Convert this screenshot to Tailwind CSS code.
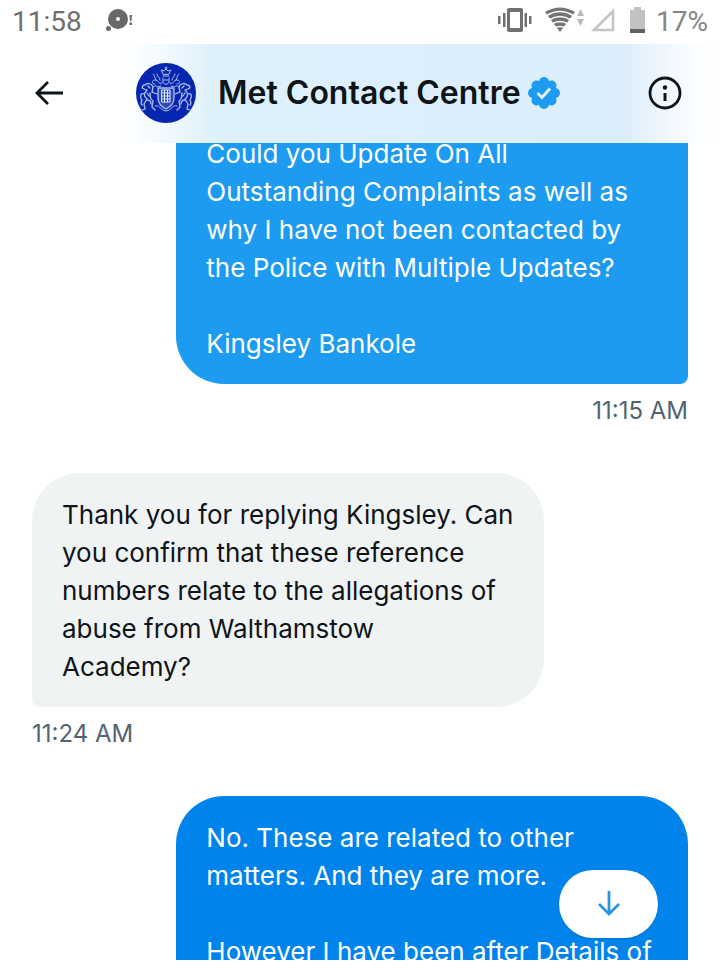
<!DOCTYPE html>
<html lang="en">
<head>
    <meta charset="UTF-8">
    <meta name="viewport" content="width=device-width, initial-scale=1.0">
    <title>Met Contact Centre</title>
    <script src="https://cdn.jsdelivr.net/npm/@tailwindcss/browser@4"></script>
</head>
<body class="bg-white text-[#0f1419] font-['Inter','Liberation_Sans',sans-serif] h-screen flex flex-col overflow-hidden">

<!-- Status bar -->
<div class="h-11 shrink-0 flex items-center justify-between px-3 text-[#707070] font-['Roboto',sans-serif] text-[28px] leading-8">
    <div class="flex items-center gap-6">
        <span>11:58</span>
        <svg class="w-7 h-6 mb-1" viewBox="0 0 28 24" fill="#686868">
            <path fill-rule="evenodd" d="M12 1a10 10 0 1 1 0 20a10 10 0 0 1 0-20zm0 8a2 2 0 1 0 0 4a2 2 0 0 0 0-4z"/>
            <circle cx="2.500" cy="20.500" r="2.500"/>
            <path d="M23.500 7h2.500l-.5 6h-1.500zM23.500 14.500h2.500v2.500h-2.500z"/>
        </svg>
    </div>
    <div class="flex items-center">
        <svg class="w-[150px] h-8 mr-2" viewBox="0 0 150 32">
            <g fill="#707070">
                <path fill-rule="evenodd" d="M11 2h12a2 2 0 0 1 2 2v20a2 2 0 0 1-2 2H11a2 2 0 0 1-2-2V4a2 2 0 0 1 2-2zm1 4v16h10V6z"/>
                <path d="M0 10h2.500v8H0zM5 7h2.500v14H5zM26.500 7H29v14h-2.500zM31 10h2.500v8H31z"/>
            </g>
            <path fill="#757575" d="M47 6Q62-3 77 6L62 26z"/>
            <path fill="none" stroke="#fff" stroke-width="1.500" d="M48 10q14-9 28 0M51 14q11-7 22 0M54 18q8-5 16 0M57 22q5-3 10 0"/>
            <path fill="#b8b8b8" d="M79 10l3.500-7 3.500 7zM79 13h7l-3.500 7z"/>
            <path fill="none" stroke="#c4c4c4" stroke-width="2.500" d="M96 24L115 5v19z"/>
            <path fill="#c2c2c2" d="M136 1h7v3h4v19h-15V4h4z"/>
            <path fill="#606060" d="M132 23h15v4h-15z"/>
        </svg>
        <span class="text-[#858585]">17%</span>
    </div>
</div>

<!-- Conversation header -->
<header class="relative z-10 shrink-0 h-[99px] flex items-center pl-8 pr-[37px] pb-0.5 bg-[linear-gradient(to_right,#fff_17%,#f2f9fe_23%,#def0fc_30%,#dceefc_87%,#f4faff_94%,#fff_99%)]">
    <button type="button" aria-label="Back" class="w-9 h-9">
        <svg class="w-9 h-9" viewBox="0 0 36 36" fill="none" stroke="#0f1419" stroke-width="2.800">
            <path d="M31 18H6M16 7L5 18l11 11"/>
        </svg>
    </button>
    <svg class="w-15 h-15 ml-17 shrink-0" viewBox="0 0 60 60" fill="none" stroke="#aebfeb" stroke-linecap="round">
        <circle cx="30" cy="30" r="30" fill="#0726b0" stroke="none"/>
        <!-- crown and helmet -->
        <path stroke-width="1" d="M27 11l-2-4 3 1 2-2 2 2 3-1-2 4zM27 13h6M30 4v2M29 5h2M27 15v4c1 3 5 3 6 0v-4M28 17h4"/>
        <!-- mantling -->
        <path stroke-width="1" d="M26 20c-4 2-4-4-7-3-4 0-3 5 0 4M34 20c4 2 4-4 7-3 4 0 3 5 0 4M25 23c-4 2-6-2-8 1M35 23c4 2 6-2 8 1M21 18c-3-2-1-5-4-7M39 18c3-2 1-5 4-7M24 17c0-3-3-3-3-6M36 17c0-3 3-3 3-6"/>
        <!-- shield -->
        <path stroke-width="1.300" fill="#2d4abb" d="M22 25h16v10c0 6-4 9-8 11-4-2-8-5-8-11z"/>
        <path stroke-width="1" stroke="#dbe4fa" d="M26 27h8v12h-8zM28.500 27v12M31.500 27v12M26 30h8M26 33h8M26 36h8"/>
        <!-- supporters -->
        <g stroke-width="1.300">
            <path d="M17 24c-1-3-5-5-8-2-3 0-4 3-1 4l3 1M17 24l-1 5 5 2M11 27c-3 3-4 6 0 9l-3 5 1 5-3 1M14 30c1 4-1 5 3 8l-1 6 3 3M11 37c3 0 4 2 4 4M8 31c-4-2-4 4-2 6-1 2-1 4 0 5M12 23l2 2M11 30l2 3"/>
            <path d="M43 24c1-3 5-5 8-2 3 0 4 3 1 4l-3 1M43 24l1 5-5 2M49 27c3 3 4 6 0 9l3 5-1 5 3 1M46 30c-1 4 1 5-3 8l1 6-3 3M49 37c-3 0-4 2-4 4M52 31c4-2 4 4 2 6 1 2 1 4 0 5M48 23l-2 2M49 30l-2 3"/>
        </g>
        <path stroke-width="1" d="M19 43c4-2 5 4 11 5 6-1 7-7 11-5"/>
    </svg>
    <h1 class="ml-[22px] text-[32px] leading-10 font-semibold whitespace-nowrap">Met Contact Centre</h1>
    <svg class="w-8 h-8 ml-[7px] shrink-0" viewBox="0 0 32 32">
        <g fill="#1d9bf0">
            <circle cx="16" cy="16" r="13"/>
            <circle cx="16" cy="5" r="5"/><circle cx="23.500" cy="8.500" r="5"/><circle cx="27" cy="16" r="5"/><circle cx="23.500" cy="23.500" r="5"/>
            <circle cx="16" cy="27" r="5"/><circle cx="8.500" cy="23.500" r="5"/><circle cx="5" cy="16" r="5"/><circle cx="8.500" cy="8.500" r="5"/>
        </g>
        <path d="M9.500 16l4.500 4.500 8-9" fill="none" stroke="#e6f4fe" stroke-width="2.800"/>
    </svg>
    <button type="button" aria-label="Conversation info" class="w-9 h-9 ml-auto">
        <svg class="w-9 h-9" viewBox="0 0 36 36">
            <circle cx="18" cy="18" r="15" fill="none" stroke="#0f1419" stroke-width="2.800"/>
            <circle cx="18" cy="12.500" r="2.200" fill="#0f1419"/>
            <path d="M16.500 18h3v8h-3z" fill="#0f1419"/>
        </svg>
    </button>
</header>

<!-- Messages -->
<main class="relative flex-1 min-h-0 overflow-hidden mb-[11px] px-8 text-[26px] leading-[38px]">
    <div class="-mt-[31px] flex flex-col">
        <div class="self-end w-[78%] bg-[#1d9bf0] text-white px-[30px] pt-[23px] pb-[21px] rounded-bl-[48px] rounded-br-lg">
            <p>Could you Update On All<br>Outstanding Complaints as well as<br>why I have not been contacted by<br>the Police with Multiple Updates?</p>
            <p class="mt-[38px]">Kingsley Bankole</p>
        </div>
        <time class="self-end mt-3 text-[24px] leading-[30px] text-[#536471]">11:15 AM</time>

        <div class="self-start mt-[47px] w-[78%] bg-[#eff3f4] px-[30px] pt-[23px] pb-[21px] rounded-[48px] rounded-bl-lg">
            <p>Thank you for replying Kingsley. Can<br>you confirm that these reference<br>numbers relate to the allegations of<br>abuse from Walthamstow<br>Academy?</p>
        </div>
        <time class="self-start mt-3 text-[24px] leading-[30px] text-[#536471]">11:24 AM</time>

        <div class="self-end mt-[47px] w-[78%] bg-[#0084eb] text-white px-[30px] pt-[23px] pb-[21px] rounded-t-[48px]">
            <p>No. These are related to other<br>matters. And they are more.</p>
            <p class="mt-[38px]">However I have been after Details of</p>
        </div>
    </div>
    <button type="button" aria-label="Scroll to latest" class="absolute right-[62px] bottom-[22px] w-[99px] h-[68px] rounded-full bg-white shadow-sm flex items-center justify-center">
        <svg class="w-7 h-7" viewBox="0 0 28 28" fill="none" stroke="#2b95e0" stroke-width="2.800">
            <path d="M14 1v23M4 14l10 10 10-10"/>
        </svg>
    </button>
</main>

</body>
</html>
